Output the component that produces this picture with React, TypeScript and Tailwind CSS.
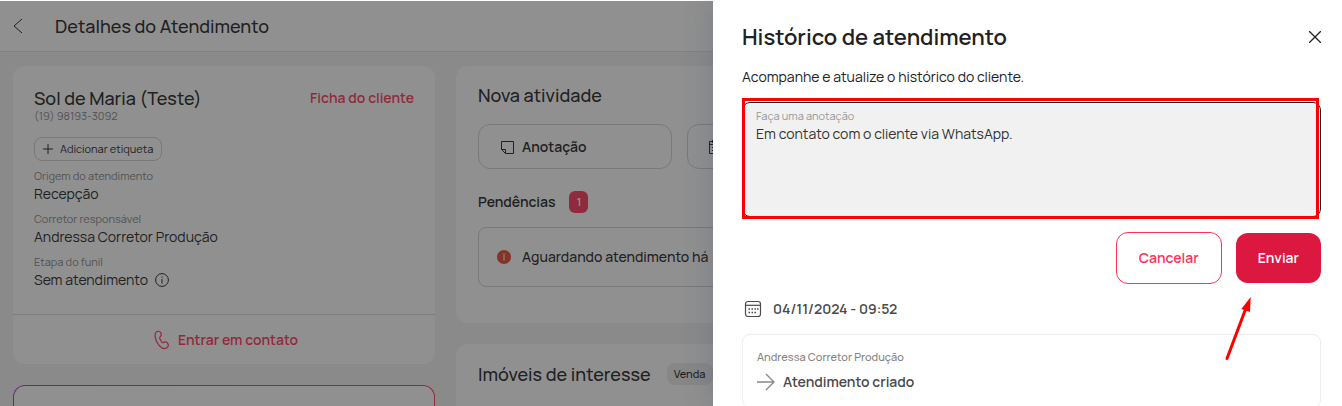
import { useState } from 'react';
import type { ReactNode } from 'react';

const DETAILS = [
  { label: 'Origem do atendimento', value: 'Recepção' },
  { label: 'Corretor responsável', value: 'Andressa Corretor Produção' },
  { label: 'Etapa do funil', value: 'Sem atendimento', info: true },
];

function Card({ children, className = '' }: { children?: ReactNode; className?: string }) {
  return <section className={`bg-white rounded-xl ${className}`}>{children}</section>;
}

function InfoIcon() {
  return (
    <svg width="14" height="14" viewBox="0 0 14 14" fill="none" stroke="#212121" aria-hidden="true">
      <circle cx="7" cy="7" r="6.4" />
      <path d="M7 6v4.5M7 3.5v1.2" />
    </svg>
  );
}

function PhoneIcon() {
  return (
    <svg width="16" height="20" viewBox="0 0 16 20" fill="none" stroke="#fe3258" strokeWidth="1.2" strokeLinejoin="round" aria-hidden="true">
      <path d="M2.4 1.8C3.6 1 5.6 1 6.5 2.3c.9 1.3 1 3-.1 4.2-.8.8-.9 1.4-.5 2.4.5 1.2 1.2 2.5 2 3.3.6.6 1.2.6 2 .2 1.5-.7 3.3-.1 4 1.4.6 1.3.2 3.1-1 3.9-1.5 1-3.8 1-5.5-.3C4.3 15.2 2 11.2 1.3 7.2.9 4.7 1 2.7 2.4 1.8Z" />
    </svg>
  );
}

function NoteIcon() {
  return (
    <svg width="14" height="14" viewBox="0 0 14 14" fill="none" stroke="#212121" aria-hidden="true">
      <path d="M.5 9.5v-8h12v12h-8z" />
      <path d="M.5 9.5h4v4" />
    </svg>
  );
}

function TaskIcon() {
  return (
    <svg width="14" height="14" viewBox="0 0 14 14" fill="none" stroke="#212121" aria-hidden="true">
      <path d="M.5 1.5h13v12H.5zM.5 4.5h13M3.5 0v3M10.5 0v3M3 7.5h8M3 10.5h5" />
    </svg>
  );
}

function CalendarIcon() {
  return (
    <svg width="18" height="18" viewBox="0 0 18 18" fill="none" stroke="#4a4a4a" strokeWidth="1.2" aria-hidden="true">
      <rect x="1.5" y="1.5" width="15" height="15" rx="2.5" />
      <path d="M1.5 5.3h15" />
      <path d="M7.5 9H9M10.4 9h1.5M13 9h1.5M4.5 9H6M4.5 12.5H6M7.5 12.5H9M10.4 12.5h1.5" strokeWidth="1.5" />
    </svg>
  );
}

export default function App() {
  const [note, setNote] = useState('Em contato com o cliente via WhatsApp.');

  return (
    <div className="relative h-screen overflow-hidden bg-white pt-px text-[#212121] font-[Manrope,Inter,sans-serif]">
      <div className="relative h-full bg-[#f3f3f3]">
        <header className="flex items-center h-[51px] gap-8 px-3 bg-white border-b border-[#e2e2e2]">
          <button aria-label="Voltar">
            <svg width="11" height="16" viewBox="0 0 11 16" fill="none" stroke="#212121" aria-hidden="true">
              <path d="M10 1 2 8l8 7" />
            </svg>
          </button>
          <h1 className="text-lg font-medium">Detalhes do Atendimento</h1>
        </header>

        <main className="flex gap-[21px] pl-[13px] pt-[14px]">
          <div className="w-[422px] shrink-0">
            <Card>
              <div className="px-[21px] pt-5 pb-6">
                <div className="flex items-center justify-between">
                  <h2 className="text-lg leading-6 font-medium">Sol de Maria (Teste)</h2>
                  <a href="#ficha" className="text-sm font-semibold text-[#fe3258]">Ficha do cliente</a>
                </div>
                <p className="text-[11px] leading-3 text-[#848484]">(19) 98193-3092</p>
                <button className="flex items-center gap-[7px] h-6 mt-[15px] px-2 border border-[#d0d0d0] rounded-lg text-[11px]">
                  <svg width="10" height="10" viewBox="0 0 10 10" stroke="#212121" aria-hidden="true">
                    <path d="M5 0v10M0 5h10" />
                  </svg>
                  Adicionar etiqueta
                </button>
                <dl className="mt-[7px] space-y-[7px]">
                  {DETAILS.map(d => (
                    <div key={d.label}>
                      <dt className="text-[11px] leading-4 text-[#848484]">{d.label}</dt>
                      <dd className="flex items-center gap-[7px] text-sm">
                        {d.value}
                        {d.info && <InfoIcon />}
                      </dd>
                    </div>
                  ))}
                </dl>
              </div>
              <button className="flex items-center justify-center gap-2 w-full h-[50px] pl-1 border-t border-[#d8d8d8] text-sm font-semibold text-[#fe3258]">
                <PhoneIcon />
                Entrar em contato
              </button>
            </Card>
            <div className="mt-[21px] h-40 rounded-xl p-px bg-linear-to-r from-[#a03cc0] to-[#fe3258]">
              <div className="h-full rounded-[11px] bg-white" />
            </div>
          </div>

          <div className="flex-1 min-w-0">
            <Card className="px-[22px] pt-[17px] pb-9">
              <h2 className="text-lg leading-6 font-medium">Nova atividade</h2>
              <div className="flex gap-[15px] mt-[17px]">
                <button className="flex items-center gap-[7px] w-[194px] h-[45px] px-[22px] border border-[#d0d0d0] rounded-xl text-sm font-semibold">
                  <NoteIcon />
                  Anotação
                </button>
                <button className="flex items-center gap-[7px] w-[194px] h-[45px] px-[21px] border border-[#d0d0d0] rounded-xl text-sm font-semibold">
                  <TaskIcon />
                  Tarefa
                </button>
              </div>
              <div className="flex items-center gap-3.5 mt-[22px]">
                <h3 className="text-sm font-semibold">Pendências</h3>
                <span className="flex items-center justify-center w-[19px] h-[22px] rounded-md bg-[#fe3258] text-[11px] font-semibold text-white">1</span>
              </div>
              <div className="flex items-center gap-[11px] h-[60px] mt-3.5 px-[18px] border border-[#d0d0d0] rounded-lg text-sm font-medium whitespace-nowrap">
                <svg width="14" height="14" viewBox="0 0 14 14" aria-hidden="true">
                  <circle cx="7" cy="7" r="7" fill="#e8452c" />
                  <path d="M7 3.5v7" stroke="#fff" />
                </svg>
                Aguardando atendimento há
              </div>
            </Card>

            <Card className="h-52 mt-[21px] px-[22px] pt-[18px]">
              <div className="flex items-center gap-4">
                <h2 className="text-lg leading-6 font-medium">Imóveis de interesse</h2>
                <span className="flex items-center h-[22px] px-[7px] rounded-lg bg-[#ededed] text-[11px] font-medium">Venda</span>
              </div>
            </Card>
          </div>
        </main>

        <div className="absolute inset-0 bg-[#212121]/50" />
      </div>

      <aside
        role="dialog"
        aria-labelledby="history-title"
        className="absolute inset-y-0 right-0 w-[629px] pl-[29px] pr-[21px] pt-[23px] bg-white shadow-[0_0_28px_#3c466440]"
      >
        <div className="flex items-center justify-between">
          <h2 id="history-title" className="text-[22px] leading-7 font-semibold">Histórico de atendimento</h2>
          <button aria-label="Fechar">
            <svg width="12" height="12" viewBox="0 0 12 12" stroke="#212121" strokeWidth="1.3" aria-hidden="true">
              <path d="m0 0 12 12M12 0 0 12" />
            </svg>
          </button>
        </div>
        <p className="mt-[17px] text-sm leading-[18px]">Acompanhe e atualize o histórico do cliente.</p>

        <div className="relative mt-4">
          <div className="h-[115px] px-[13px] pt-[5px] bg-[#f1f1f1] border border-[#212121] rounded-lg">
            <label htmlFor="note" className="block text-[11px] leading-4 text-[#999]">Faça uma anotação</label>
            <textarea
              id="note"
              value={note}
              onChange={e => setNote(e.target.value)}
              className="block w-full h-20 resize-none bg-transparent text-sm text-[#333] outline-none"
            />
          </div>
          <div className="absolute -top-1 -bottom-0.5 left-0 right-0.5 border-3 border-[#f00] pointer-events-none" />
        </div>

        <div className="relative flex items-center justify-end gap-3.5 mt-[15px] text-sm font-semibold">
          <button className="h-[52px] px-[22px] border border-[#fe3258] rounded-xl text-[#fe3258]">Cancelar</button>
          <button className="h-[50px] px-[22px] rounded-xl bg-[#dc1840] text-white">Enviar</button>
          <svg className="absolute top-16 right-[68px] pointer-events-none" width="28" height="66" viewBox="0 0 28 66" aria-hidden="true">
            <path d="M2 62.5 21 12" stroke="#f00" strokeWidth="3" strokeLinecap="round" />
            <path d="M25.7 1 16.3 13l8.7 3z" fill="#f00" />
          </svg>
        </div>

        <div className="flex items-center gap-[11px] mt-[15px] pl-0.5 text-sm font-semibold text-[#4a4a4a]">
          <CalendarIcon />
          04/11/2024 - 09:52
        </div>
        <div className="h-[74px] mt-[15px] px-[14px] pt-[14px] border border-[#eee] rounded-lg">
          <p className="text-[11px] leading-[15px] font-medium text-[#848484]">Andressa Corretor Produção</p>
          <p className="flex items-center gap-2 mt-2 text-sm font-semibold text-[#4a4a4a]">
            <svg width="18" height="18" viewBox="0 0 18 18" fill="none" stroke="#888" strokeWidth="1.3" aria-hidden="true">
              <path d="M0 9h17M9 1l8 8-8 8" />
            </svg>
            Atendimento criado
          </p>
        </div>
      </aside>
    </div>
  );
}
